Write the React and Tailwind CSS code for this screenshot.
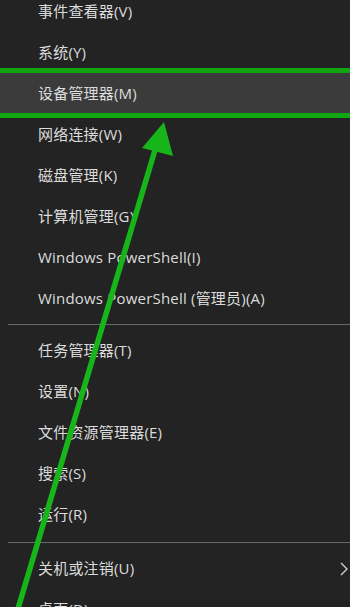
import React from "react";

const group1 = [
  "事件查看器(V)",
  "系统(Y)",
  "设备管理器(M)",
  "网络连接(W)",
  "磁盘管理(K)",
  "计算机管理(G)",
  "Windows PowerShell(I)",
  "Windows PowerShell (管理员)(A)",
];
const group2 = ["任务管理器(T)", "设置(N)", "文件资源管理器(E)", "搜索(S)", "运行(R)"];

function Item({ label, active, chevron }) {
  return (
    <div
      className={`h-[41px] flex items-center pl-[38px] pr-[2px] text-[15px] tracking-[0.2px] text-[#dcdcdc] ${
        active ? "bg-[#3b3b3b]" : ""
      }`}
    >
      <span className="flex-1 whitespace-nowrap">{label}</span>
      {chevron && (
        <svg width="8" height="14" viewBox="0 0 8 14" className="shrink-0">
          <path d="M1 1 L7 7 L1 13" fill="none" stroke="#cfcfcf" strokeWidth="1.4" />
        </svg>
      )}
    </div>
  );
}

function Sep({ h, at }) {
  return (
    <div className={`${h} flex flex-col`}>
      <div className={at} />
      <div className="ml-[8px] h-[1px] bg-[#6a6a6a]" />
    </div>
  );
}

export default function App() {
  return (
    <div
      className="relative w-[350px] h-[607px] overflow-hidden bg-[#232323]"
      style={{ fontFamily: '"Open Sans", "Noto Sans CJK SC", sans-serif' }}
    >
      <div className="mt-[-9px]">
        {group1.map((l, i) => (
          <Item key={l} label={l} active={i === 2} />
        ))}
        <Sep h="h-[11px]" at="h-[5px]" />
        {group2.map((l) => (
          <Item key={l} label={l} />
        ))}
        <Sep h="h-[13px]" at="h-[7px]" />
        <Item label="关机或注销(U)" chevron />
        <Item label="桌面(D)" />
      </div>
      <div className="absolute left-0 right-0 top-[68px] h-[50px] border-y-[5px] border-[#12a512]" />
      <svg className="absolute inset-0" width="350" height="607" viewBox="0 0 350 607">
        <line x1="17" y1="612" x2="158" y2="140" stroke="#17b51a" strokeWidth="5.5" />
        <polygon points="164,122 142,148 173,156" fill="#17b51a" />
      </svg>
    </div>
  );
}
